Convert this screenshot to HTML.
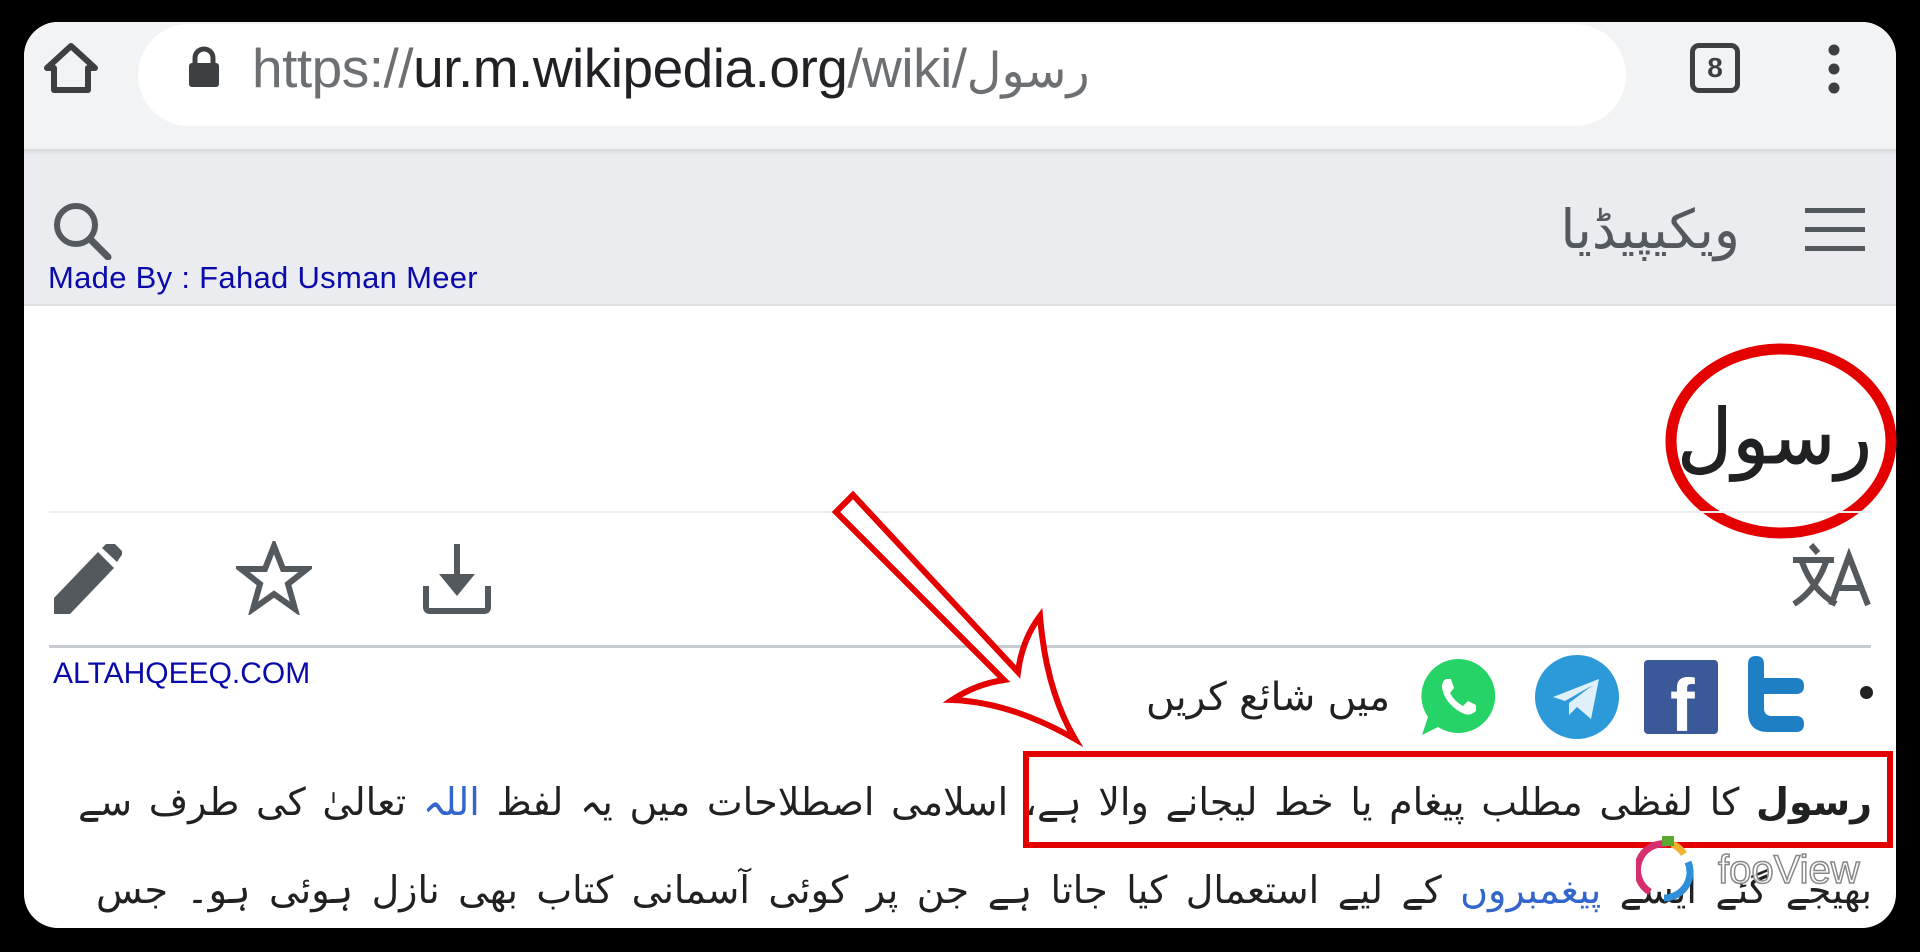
<!DOCTYPE html>
<html><head><meta charset="utf-8"><style>
*{margin:0;padding:0;box-sizing:border-box}
html,body{width:1920px;height:952px;background:#000;overflow:hidden;font-family:"Liberation Sans","DejaVu Sans",sans-serif}
.card{position:absolute;left:24px;top:22px;width:1872px;height:906px;background:#fff;border-radius:34px;overflow:hidden}
.abs{position:absolute}
.ur{font-family:"DejaVu Sans",sans-serif;direction:rtl}
</style></head><body>
<div class="card">
 <div class="abs" style="left:0;top:0;width:1872px;height:127px;background:#f1f3f4"></div>
 <div class="abs" style="left:0;top:127px;width:1872px;height:6px;background:linear-gradient(#d5d7da,#e9ebee)"></div>
 <div class="abs" style="left:0;top:133px;width:1872px;height:150px;background:#eaecf0"></div>
 <div class="abs" style="left:0;top:282px;width:1872px;height:2px;background:#dfe1e4"></div>
 <div class="abs" style="left:114px;top:2px;width:1488px;height:102px;background:#fff;border-radius:51px"></div>
</div>
<svg class="abs" style="left:42px;top:42px" width="58" height="52" viewBox="0 0 58 52"><path d="M29 4 L5 26 H12 V48 H46 V26 H53 Z" fill="none" stroke="#3c4043" stroke-width="6" stroke-linejoin="round"/></svg>
<svg class="abs" style="left:186px;top:46px" width="36" height="42" viewBox="0 0 36 42"><path d="M9 18 V12 a9 9 0 0 1 18 0 V18" fill="none" stroke="#3c4043" stroke-width="5"/><rect x="3" y="17" width="30" height="24" rx="3" fill="#3c4043"/></svg>
<div class="abs" style="left:252px;top:36px;font-size:55px;color:#6d7073;white-space:nowrap;line-height:64px;letter-spacing:-0.5px">https://<span style="color:#202124">ur.m.wikipedia.org</span>/wiki/<span style="font-family:'DejaVu Sans',sans-serif;font-size:48px">رسول</span></div>
<div class="abs" style="left:1690px;top:43px;width:50px;height:50px;border:5px solid #3c4043;border-radius:9px;font-size:28px;font-weight:bold;color:#3c4043;text-align:center;line-height:40px">8</div>
<svg class="abs" style="left:1825px;top:44px" width="18" height="50"><circle cx="9" cy="6" r="5.5" fill="#3c4043"/><circle cx="9" cy="25" r="5.5" fill="#3c4043"/><circle cx="9" cy="44" r="5.5" fill="#3c4043"/></svg>
<svg class="abs" style="left:50px;top:200px" width="66" height="60" viewBox="0 0 66 60"><circle cx="26" cy="25" r="19" fill="none" stroke="#54595d" stroke-width="6"/><path d="M40 39 L58 57" stroke="#54595d" stroke-width="7" stroke-linecap="round"/></svg>
<div class="abs" style="left:48px;top:260px;font-size:31px;color:#0a0aab;white-space:nowrap;letter-spacing:0.3px">Made By : Fahad Usman Meer</div>
<div class="abs ur" style="left:1500px;top:192px;width:240px;text-align:right;font-size:54px;color:#54595d;line-height:76px">ویکیپیڈیا</div>
<svg class="abs" style="left:1805px;top:206px" width="60" height="48"><rect x="0" y="2" width="60" height="5" fill="#54595d"/><rect x="0" y="21" width="60" height="5" fill="#54595d"/><rect x="0" y="40" width="60" height="5" fill="#54595d"/></svg>
<div class="abs ur" style="left:1660px;top:392px;width:212px;text-align:right;font-size:76px;color:#202122;line-height:90px;-webkit-text-stroke:1px #202122">رسول</div>
<svg class="abs" style="left:1660px;top:340px" width="240" height="205"><ellipse cx="121" cy="101" rx="110" ry="92" fill="none" stroke="#e50000" stroke-width="11"/></svg>
<div class="abs" style="left:49px;top:511px;width:1822px;height:2px;background:#eaecf0"></div>
<svg class="abs" style="left:54px;top:544px" width="68" height="70" viewBox="0 0 68 70"><path d="M0 70 V54 L44 8 L60 24 L16 70 Z" fill="#54595d"/><path d="M48 4 L54 -2 Q57 -4 60 -1 L67 6 Q70 9 67 12 L63 18 Z" fill="#54595d"/></svg>
<svg class="abs" style="left:236px;top:541px" width="76" height="74" viewBox="0 0 76 74"><path d="M38 5 L47 28 L71 28 L52 43 L59 68 L38 53 L17 68 L24 43 L5 28 L29 28 Z" fill="none" stroke="#54595d" stroke-width="6" stroke-linejoin="miter"/></svg>
<svg class="abs" style="left:423px;top:544px" width="68" height="70" viewBox="0 0 68 70"><rect x="31" y="0" width="6" height="34" fill="#54595d"/><path d="M16 30 H52 L34 52 Z" fill="#54595d"/><path d="M3 42 V63 Q3 67 7 67 H61 Q65 67 65 63 V42" fill="none" stroke="#54595d" stroke-width="6"/></svg>
<svg class="abs" style="left:0;top:0" width="1920" height="952"><g fill="none" stroke="#54595d" stroke-width="6"><path d="M1793 560 H1834"/><path d="M1811 545 L1818 553"/><path d="M1802 562 Q1812 590 1836 604"/><path d="M1826 562 Q1816 590 1794 604"/><path d="M1831 605 L1849 556 L1868 605"/><path d="M1838 588 H1861"/></g></svg>
<div class="abs" style="left:49px;top:645px;width:1822px;height:3px;background:#c8ccd1"></div>
<div class="abs" style="left:53px;top:657px;font-size:30px;color:#0a0aab;white-space:nowrap">ALTAHQEEQ.COM</div>
<div class="abs" style="left:1860px;top:686px;width:13px;height:13px;border-radius:50%;background:#202122"></div>
<svg class="abs" style="left:1744px;top:656px" width="64" height="78" viewBox="0 0 64 78"><path d="M4 8 Q4 0 12 0 Q20 0 20 8 V22 H52 Q60 22 60 30 Q60 38 52 38 H20 V52 Q20 60 28 60 H52 Q60 60 60 68 Q60 76 52 76 H24 Q4 76 4 56 Z" fill="#1f7fc4"/></svg>
<div class="abs" style="left:1644px;top:660px;width:74px;height:74px;background:#3b5998;border-radius:4px;overflow:hidden"><div style="position:absolute;left:26px;top:6px;font-size:74px;font-weight:bold;color:#fff;font-family:'Liberation Sans',sans-serif;line-height:80px">f</div></div>
<svg class="abs" style="left:1535px;top:655px" width="84" height="84" viewBox="0 0 84 84"><circle cx="42" cy="42" r="42" fill="#2c9ad8"/><path d="M18 42 L64 24 L56 64 L42 52 L34 60 L34 48 L58 30 L30 46 Z" fill="#dff0fa"/></svg>
<svg class="abs" style="left:1418px;top:655px" width="82" height="84" viewBox="0 0 82 84"><path d="M41 4 A37 37 0 1 1 20 72 L4 80 L10 62 A37 37 0 0 1 41 4 Z" fill="#25d366"/><path d="M28 24 Q24 26 24 32 Q26 48 44 58 Q52 62 58 56 L58 50 L50 46 L45 51 Q36 46 32 38 L36 33 L33 24 Z" fill="#fff"/></svg>
<div class="abs ur" style="left:1080px;top:668px;width:310px;text-align:right;font-size:39px;color:#202122;line-height:60px">میں شائع کریں</div>
<div class="abs ur" style="left:78px;top:772px;width:1794px;font-size:38px;color:#202122;line-height:60px;text-align:justify;text-align-last:justify"><b>رسول</b> کا لفظی مطلب پیغام یا خط لیجانے والا ہے، اسلامی اصطلاحات میں یہ لفظ <span style="color:#3366cc">اللہ</span> تعالیٰ کی طرف سے</div>
<div class="abs ur" style="left:96px;top:860px;width:1776px;font-size:38px;color:#202122;line-height:60px;text-align:justify;text-align-last:justify">بھیجے گئے ایسے <span style="color:#3366cc">پیغمبروں</span> کے لیے استعمال کیا جاتا ہے جن پر کوئی آسمانی کتاب بھی نازل ہوئی ہو۔ جس</div>
<div class="abs" style="left:1023px;top:751px;width:870px;height:97px;border:6px solid #e50000"></div>
<svg class="abs" style="left:0;top:0" width="1920" height="952"><path d="M836 512 L853 495 L1018 672 Q1022 640 1040 616 Q1046 690 1075 739 Q1010 702 952 700 Q976 684 1004 680 Z" fill="#fff" stroke="#e50000" stroke-width="6" stroke-linejoin="miter"/></svg>
<svg class="abs" style="left:1636px;top:836px" width="62" height="68"><path d="M31 8 A26 26 0 0 0 14 56" fill="none" stroke="#d62e6e" stroke-width="7"/><path d="M36 8 A26 26 0 0 1 48 18" fill="none" stroke="#f1b12c" stroke-width="7"/><path d="M52 26 A26 26 0 0 1 28 62" fill="none" stroke="#2f8fd8" stroke-width="7"/><rect x="26" y="0" width="12" height="10" fill="#5aa832"/></svg>
<div class="abs" style="left:1718px;top:848px;font-size:40px;color:rgba(255,255,255,0.85);-webkit-text-stroke:1.5px #888;font-family:'Liberation Sans',sans-serif">fooView</div>
</body></html>
